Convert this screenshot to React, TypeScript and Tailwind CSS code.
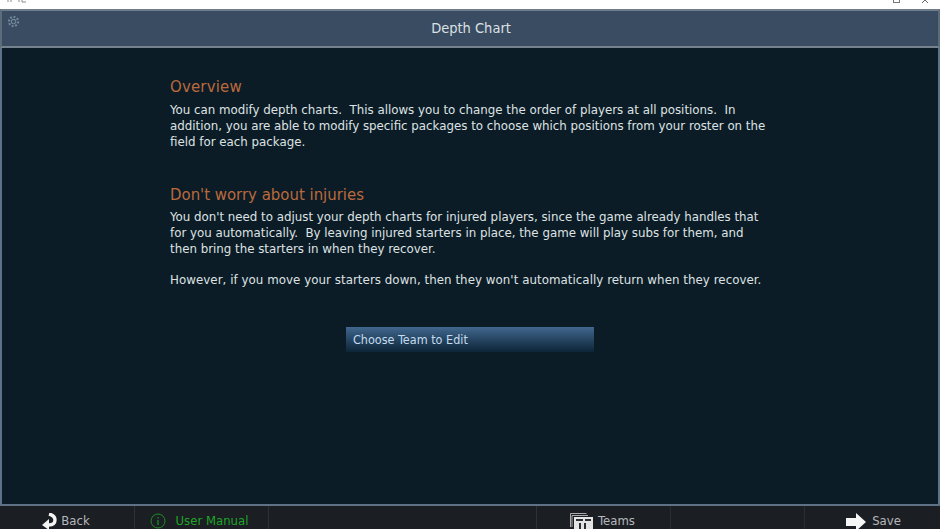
import React from "react";

const para = "text-[13.15px] leading-[15.75px] text-[#dfe2e2] whitespace-pre";
const head = "text-[16.6px] leading-[20px] text-[#bb6a3c] whitespace-pre";

function Gear() {
  return (
    <svg width="13" height="13" viewBox="0 0 24 24" fill="none" stroke="#73879b" strokeWidth="2" className="ml-[5px] mt-[4px]">
      <circle cx="12" cy="12" r="4" />
      <circle cx="12" cy="12" r="8.5" strokeDasharray="3.5 3" strokeWidth="4" />
    </svg>
  );
}

export default function App() {
  return (
    <div className="w-[940px] h-[529px] overflow-hidden flex flex-col bg-[#0b1c27] font-['DejaVu_Sans_Condensed','DejaVu_Sans',sans-serif]">
      <div className="h-[9px] shrink-0 bg-white flex overflow-hidden">
        <svg width="24" height="3" viewBox="0 0 24 3" className="ml-[7px]" stroke="#8a8a8a" fill="none"><path d="M1 0v2M4 0v2M12 0v2M15 0v2h4" /></svg>
        <div className="ml-auto mr-[11px] flex items-start gap-[21px] h-[3px] overflow-hidden">
          <div className="w-[7px] h-[7px] border border-[#777] -mt-[4px]" />
          <svg width="8" height="8" viewBox="0 0 8 8" className="-mt-[4px]" stroke="#666" fill="none"><path d="M0 0l8 8M8 0L0 8" /></svg>
        </div>
      </div>
      <div className="h-[39px] shrink-0 bg-[#394c61] border-t-2 border-t-[#6f7d8a] border-b-2 border-b-[#75838f] border-x-2 border-x-[#5d6c7b] relative flex items-center justify-center">
        <div className="absolute left-0 top-0"><Gear /></div>
        <span className="text-[14.5px] text-[#dce0e4] pl-[2px]">Depth Chart</span>
      </div>
      <div className="flex-1 border-x-2 border-x-[#5d7286] border-b-2 border-b-[#5f7285] flex flex-col pl-[168px] pt-[29px]">
        <div className={head + " tracking-[0.2px]"}>Overview</div>
        <div className={"mt-[5px] " + para}>
          {"You can modify depth charts.  This allows you to change the order of players at all positions.  In\naddition, you are able to modify specific packages to choose which positions from your roster on the\nfield for each package."}
        </div>
        <div className={"mt-[36px] " + head}>Don't worry about injuries</div>
        <div className={"mt-[4px] " + para}>
          {"You don't need to adjust your depth charts for injured players, since the game already handles that\nfor you automatically.  By leaving injured starters in place, the game will play subs for them, and\nthen bring the starters in when they recover.\n\n"}
          <span className="tracking-[0.05px]">However, if you move your starters down, then they won't automatically return when they recover.</span>
        </div>
        <div className="mt-[39px] ml-[176px] w-[248px] h-[25px] bg-gradient-to-b from-[#41688f] to-[#0d2538] pl-[7px] pt-[1px] flex items-center text-[12.5px] text-[#c4dcef]">
          Choose Team to Edit
        </div>
      </div>
      <div className="h-[23px] shrink-0 bg-[#1b1e22] flex items-start text-[13px] leading-[16px] text-[#b4b7bb] overflow-hidden">
        <div className="h-full w-[135px] border-r border-[#2e3238] flex items-start justify-center gap-[4px] pt-[7px] pr-[3px]">
          <svg width="16" height="18" viewBox="0 0 16 18" fill="#f4f4f4"><path d="M8 1c4 1 6 3 6 6 0 3-2 5-6 5" fill="none" stroke="#f4f4f4" strokeWidth="3.4" /><path d="M1 12l7-6v11z" /></svg>
          <span>Back</span>
        </div>
        <div className="h-full w-[134px] border-r border-[#2e3238] flex items-start justify-center gap-[10px] pt-[7px] pr-[5px] text-[#1fa32a]">
          <svg width="16" height="16" viewBox="0 0 16 16" fill="none" stroke="#1a8f25"><circle cx="8" cy="8" r="7" /><path d="M8 7v5M8 4v1.4" strokeWidth="1.3" /></svg>
          <span>User Manual</span>
        </div>
        <div className="h-full w-[268px] border-r border-[#2e3238]" />
        <div className="h-full w-[134px] border-r border-[#2a2e33] flex items-start justify-center gap-[5px] pt-[7px] pr-[2px]">
          <svg width="23" height="16" viewBox="0 0 23 16" fill="none"><path d="M0.5 14V0.5h16M2 14V2.5h16" stroke="#a8a8a8" /><path d="M4 4h19v12H4z" fill="#e4e4e4" /><path d="M6 6h7v2H6zM15 6h6v2h-6zM9 10h2v6H9zM14 10h2v6h-2z" fill="#2a2d32" /></svg>
          <span>Teams</span>
        </div>
        <div className="h-full w-[134px] border-r border-[#2a2e33]" />
        <div className="h-full flex-1 flex items-start justify-center gap-[6px] pt-[7px] pl-[2px]">
          <svg width="20" height="18" viewBox="0 0 20 18" fill="#f6f6f6"><path d="M0 5h10V0l10 9-10 9v-5H0z" /></svg>
          <span>Save</span>
        </div>
      </div>
    </div>
  );
}
